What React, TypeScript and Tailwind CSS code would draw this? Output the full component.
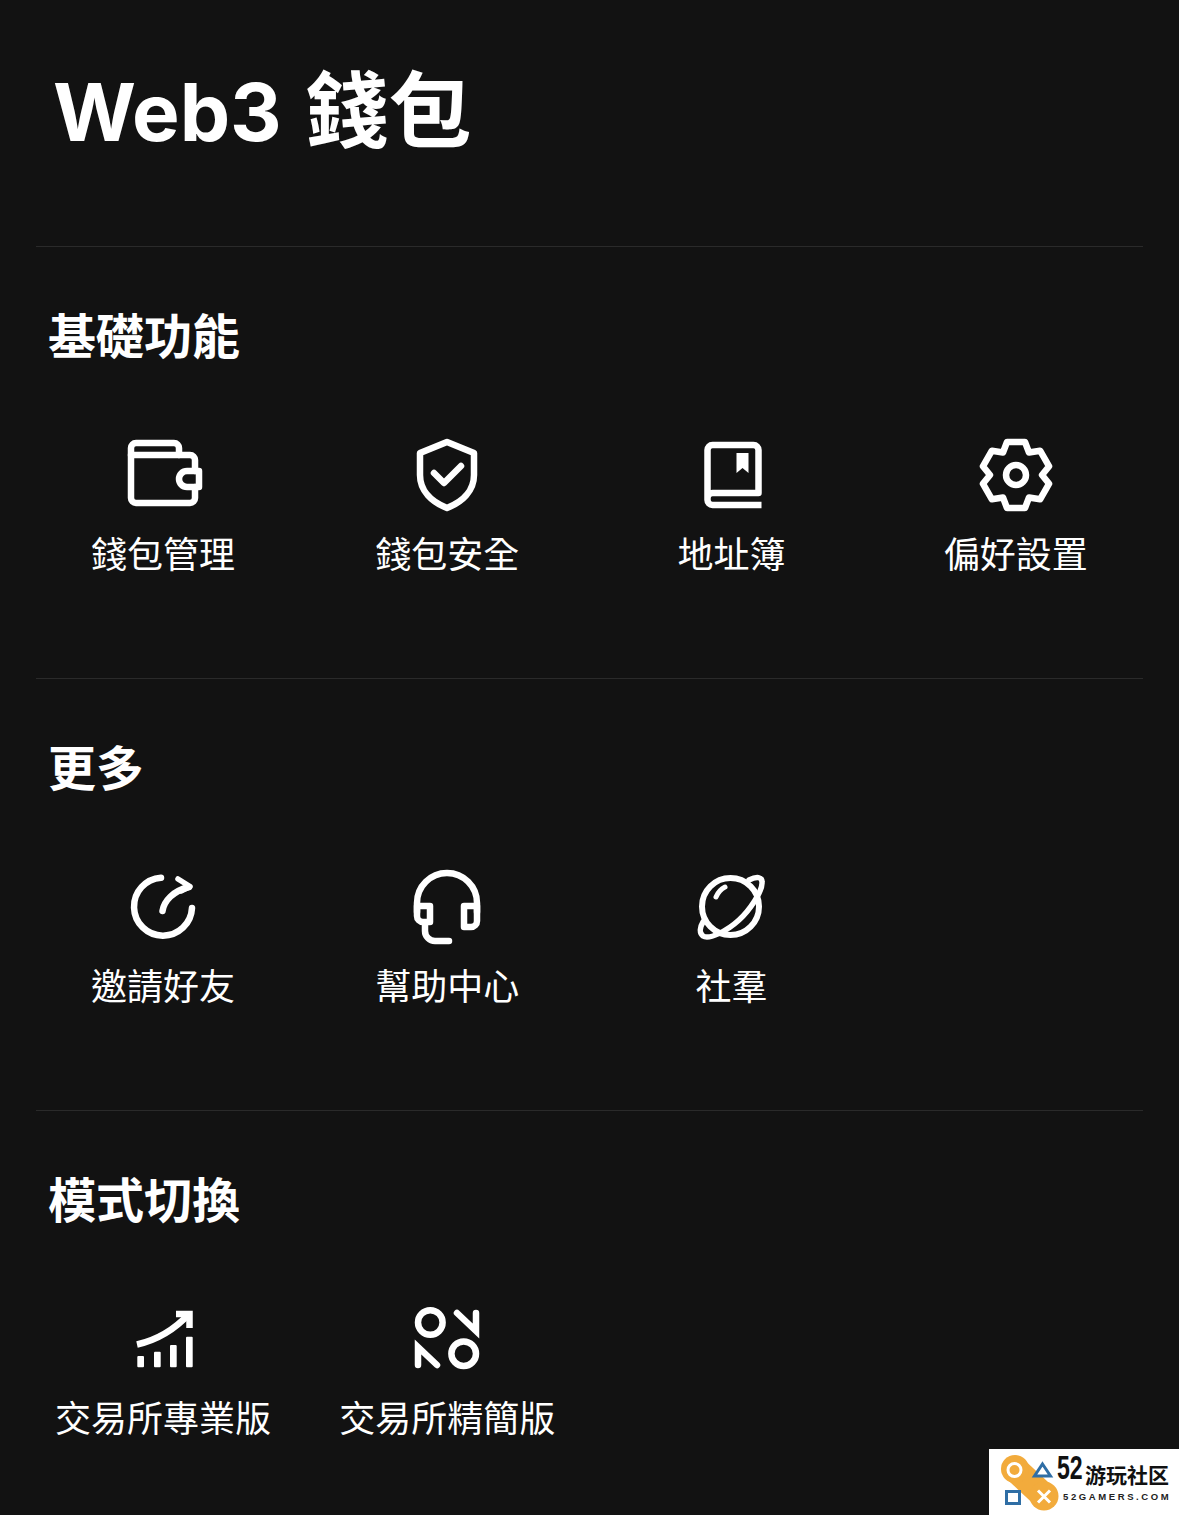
import type { ReactNode } from "react";

const FONT = "font-['Inter','Noto_Sans_CJK_TC',sans-serif]";

function Icon({ children }: { children: ReactNode }) {
  return (
    <svg
      viewBox="0 0 80 80"
      className="h-20 w-20"
      fill="none"
      stroke="#fff"
      strokeWidth={6.5}
      strokeLinejoin="round"
      strokeLinecap="round"
    >
      {children}
    </svg>
  );
}

const WalletIcon = () => (
  <Icon>
    <path d="M56 20V13a5 5 0 0 0-5-5H13a5 5 0 0 0-5 5v50a5 5 0 0 0 5 5h54a5 5 0 0 0 5-5V52" />
    <path d="M72 36V25a5 5 0 0 0-5-5H8" />
    <path d="M76 36H64a8 8 0 0 0 0 16h12z" />
  </Icon>
);

const ShieldIcon = () => (
  <Icon>
    <path d="M40 7l27 11v22c0 16-12 27-27 33C25 67 13 56 13 40V18z" />
    <path d="M27 38l10 10 17-17" />
  </Icon>
);

const BookIcon = () => (
  <Icon>
    <path
      strokeLinecap="butt"
      d="M69.500 70H20.500a5 5 0 0 1-5-5V15a5 5 0 0 1 5-5h41a5 5 0 0 1 5 5v43H20.500a5 5 0 0 0-5 5"
    />
    <polygon points="44.500,18 56.500,18 56.500,38 50.500,33 44.500,38" fill="#fff" stroke="none" />
  </Icon>
);

const GearIcon = () => (
  <Icon>
    <polygon points="31,7 49,7 53,17.5 64.1,15.7 73.1,31.3 66,40 73.1,48.7 64.1,64.3 53,62.5 49,73 31,73 27,62.5 15.9,64.3 6.9,48.7 14,40 6.9,31.3 15.9,15.7 27,17.5" />
    <circle cx="40" cy="40" r="10" />
  </Icon>
);

const InviteIcon = () => (
  <Icon>
    <path d="M38 10.7A29 29 0 1 0 69 41" />
    <path d="M39.5 44C41 34 50 24 66 20" />
    <path d="M55 12l12 7.5-9 4.500" strokeWidth={5.5} />
  </Icon>
);

const HeadsetIcon = () => (
  <Icon>
    <path d="M10 45V36a30 30 0 0 1 60 0v9" />
    <path d="M10 39h13v16h-7a6 6 0 0 1-6-6z" />
    <path d="M70 39H57v21h7a6 6 0 0 0 6-6z" />
    <path d="M18 58v6a10 10 0 0 0 10 10h14" />
  </Icon>
);

const PlanetIcon = () => (
  <Icon>
    <circle cx="38.500" cy="39.500" r="28.500" strokeWidth={6} />
    <path
      strokeWidth={5.5}
      d="M57 13C65 9 70 10 70 15C71 24 57 44 47 53C35 64 17 73 11 69C7 66 8 60 11 55"
    />
    <path strokeWidth={5} d="M24 30Q27 23 33 20" />
  </Icon>
);

const ChartIcon = () => (
  <Icon>
    <path strokeLinecap="butt" d="M14 45.5C34 41 52 30 66 15" />
    <path strokeLinecap="butt" strokeLinejoin="miter" d="M53 15h13.500v14" />
    <g fill="#fff" stroke="none">
      <rect x="14.300" y="57" width="6.700" height="11.300" rx="1" />
      <rect x="31" y="52.700" width="6.700" height="15.600" rx="1" />
      <rect x="47" y="46" width="6.700" height="22.300" rx="1" />
      <rect x="63" y="37.700" width="6.700" height="30.600" rx="1" />
    </g>
  </Icon>
);

const SwapIcon = () => (
  <Icon>
    <circle cx="23.300" cy="23.500" r="12.300" />
    <circle cx="56.700" cy="54.700" r="12.300" />
    <path strokeLinecap="round" strokeLinejoin="miter" d="M50 14l19 18V14" />
    <path strokeLinecap="round" strokeLinejoin="miter" d="M30 66L11 48v18" />
  </Icon>
);

function Section({
  title,
  items,
}: {
  title: string;
  items: { label: string; icon: ReactNode }[];
}) {
  return (
    <section className="h-[432px]">
      <div className="mx-9 h-px bg-[#2a2a2a]" />
      <h2 className="ml-[48px] mt-[60px] text-[48px] font-bold leading-[60px] text-white">
        {title}
      </h2>
      <div className="mt-[68px] grid grid-cols-4 px-[21px]">
        {items.map((item) => (
          <div key={item.label} className="flex flex-col items-center">
            {item.icon}
            <span className="mt-[18px] whitespace-nowrap text-[36px] leading-[44px] text-white">
              {item.label}
            </span>
          </div>
        ))}
      </div>
    </section>
  );
}

function Watermark() {
  return (
    <div className="absolute bottom-0 right-0 h-[66px] w-[190px] bg-white">
      <svg viewBox="0 0 190 66" className="absolute left-0 top-0 h-[66px] w-[190px]">
        <path d="M26 20L55 47" stroke="#f2ab3c" strokeWidth="26" />
        <circle cx="26" cy="20" r="14" fill="#f2ab3c" />
        <circle cx="55" cy="47" r="14.500" fill="#f2ab3c" />
        <circle cx="25.500" cy="21" r="6.500" fill="none" stroke="#fff" strokeWidth="3" />
        <path d="M53.500 15L61.500 27H45.500z" fill="#fff" stroke="#2f6ea5" strokeWidth="3" />
        <rect x="17.500" y="42.500" width="13" height="12" fill="#fff" stroke="#2f6ea5" strokeWidth="3" />
        <path d="M49 41.500l12 12M61 41.500l-12 12" stroke="#fff" strokeWidth="3" />
      </svg>
      <span className="absolute left-[68px] top-[4px] origin-left scale-x-[0.7] font-['Liberation_Sans',sans-serif] text-[33px] font-bold leading-[30px] text-[#111]">
        52
      </span>
      <span className="absolute left-[96px] top-[12px] whitespace-nowrap font-['Noto_Sans_CJK_TC',sans-serif] text-[21px] font-bold leading-[26px] text-[#111]">
        游玩社区
      </span>
      <span className="absolute left-[74px] top-[42px] whitespace-nowrap font-['Liberation_Sans',sans-serif] text-[9.500px] font-bold leading-3 tracking-[2.600px] text-[#222]">
        52GAMERS.COM
      </span>
    </div>
  );
}

export default function App() {
  return (
    <div className={`relative h-[1515px] overflow-hidden bg-[#121212] ${FONT}`}>
      <header className="h-[246px] pl-[53px] pt-[63px]">
        <h1 className="text-[80px] font-bold leading-[96px] text-white">
          Web3<span className="ml-[4px] text-[83px]"> 錢包</span>
        </h1>
      </header>
      <Section
        title="基礎功能"
        items={[
          { label: "錢包管理", icon: <WalletIcon /> },
          { label: "錢包安全", icon: <ShieldIcon /> },
          { label: "地址簿", icon: <BookIcon /> },
          { label: "偏好設置", icon: <GearIcon /> },
        ]}
      />
      <Section
        title="更多"
        items={[
          { label: "邀請好友", icon: <InviteIcon /> },
          { label: "幫助中心", icon: <HeadsetIcon /> },
          { label: "社羣", icon: <PlanetIcon /> },
        ]}
      />
      <Section
        title="模式切換"
        items={[
          { label: "交易所專業版", icon: <ChartIcon /> },
          { label: "交易所精簡版", icon: <SwapIcon /> },
        ]}
      />
      <Watermark />
    </div>
  );
}
